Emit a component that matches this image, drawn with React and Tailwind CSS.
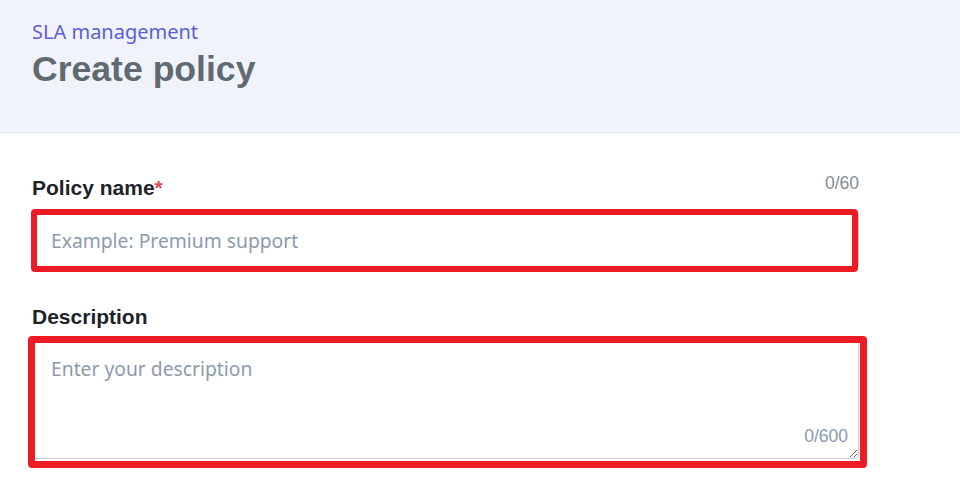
import React, { useState } from 'react';

const CreatePolicy = () => {
  const [name, setName] = useState('');
  const [description, setDescription] = useState('');

  return (
    <div className="min-h-[500px] bg-white font-['Liberation_Sans',Arial,sans-serif]">
      <header className="h-[133px] border-b border-[#dfe2e6] bg-[#f0f3f9] px-8 pt-[19px]">
        <p className="font-['Noto_Sans',sans-serif] text-[20px] leading-[26px] text-[#5b5fd7]">SLA management</p>
        <h1 className="mt-[3px] text-[35.6px] font-bold leading-[42px] text-[#5f6a72]">Create policy</h1>
      </header>

      <main className="px-8 pt-[41px]">
        <div className="w-[827px]">
          <div className="flex items-start justify-between">
            <label className="mt-[3px] text-[21px] font-bold leading-[22px] text-[#1e2329]">
              Policy name<span className="text-[#e0464c]">*</span>
            </label>
            <span className="text-[17.5px] leading-[18px] text-[#858b91]">0/60</span>
          </div>

          <div className="relative mt-[12px]">
            <input
              type="text"
              value={name}
              maxLength={60}
              onChange={(e) => setName(e.target.value)}
              placeholder="Example: Premium support"
              className="h-[58px] w-full rounded-[4px] border border-[#c9ced6] bg-white px-[18px] font-['Noto_Sans',sans-serif] text-[19.3px] text-[#1e2329] outline-none placeholder:text-[#8d9bac]"
            />
            <div className="pointer-events-none absolute bottom-[-3px] left-[-1px] right-[1px] top-[-2px] rounded-[4px] border-[6px] border-[#ed1c24]" />
          </div>

          <label className="mt-[37px] block text-[21px] font-bold leading-[22px] text-[#1e2329]">Description</label>

          <div className="relative mt-[11px]">
            <textarea
              value={description}
              maxLength={600}
              onChange={(e) => setDescription(e.target.value)}
              placeholder="Enter your description"
              className="block h-[120px] w-full rounded-[4px] border border-[#c9ced6] bg-white px-[18px] pt-[15px] font-['Noto_Sans',sans-serif] text-[19.3px] leading-[28px] text-[#1e2329] outline-none placeholder:text-[#8d9bac]"
            />
            <span className="pointer-events-none absolute bottom-[14px] right-[11px] text-[17.5px] leading-[18px] text-[#8a9aae]">0/600</span>
            <div className="pointer-events-none absolute bottom-[-9px] left-[-4px] right-[-8px] top-[-3px] rounded-[4px] border-[7px] border-[#ed1c24]" />
          </div>
        </div>
      </main>
    </div>
  );
};

export default CreatePolicy;
